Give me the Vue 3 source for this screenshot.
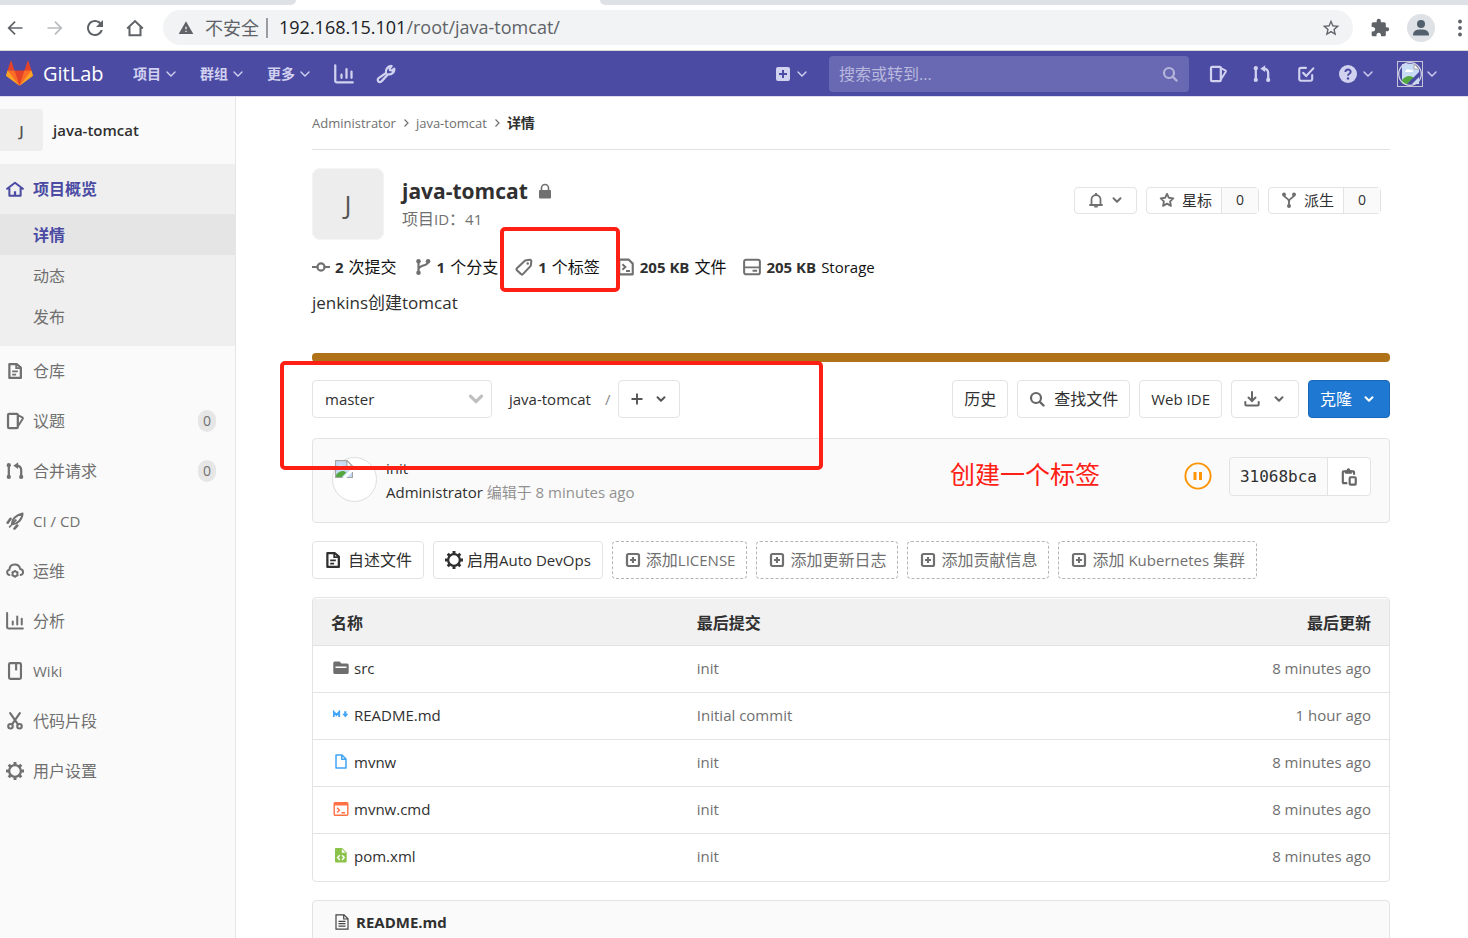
<script setup>
import { ref } from 'vue'

const branch = ref('master')
const query = ref('')

const navMenus = ['项目', '群组', '更多']
const subItems = [
  { label: '详情', active: true },
  { label: '动态', active: false },
  { label: '发布', active: false },
]
const sideItems = [
  { icon: 'doc', label: '仓库' },
  { icon: 'issues', label: '议题', count: 0 },
  { icon: 'merge', label: '合并请求', count: 0 },
  { icon: 'rocket', label: 'CI / CD', latin: true },
  { icon: 'cloud', label: '运维' },
  { icon: 'chart', label: '分析' },
  { icon: 'book', label: 'Wiki', latin: true },
  { icon: 'scissors', label: '代码片段' },
  { icon: 'gear', label: '用户设置' },
]
const files = [
  { icon: 'folder', name: 'src', commit: 'init', time: '8 minutes ago' },
  { icon: 'markdown', name: 'README.md', commit: 'Initial commit', time: '1 hour ago' },
  { icon: 'file', name: 'mvnw', commit: 'init', time: '8 minutes ago' },
  { icon: 'console', name: 'mvnw.cmd', commit: 'init', time: '8 minutes ago' },
  { icon: 'xml', name: 'pom.xml', commit: 'init', time: '8 minutes ago' },
]
</script>

<template>
  <svg class="sprite" aria-hidden="true">
    <symbol id="back" viewBox="0 0 24 24"><path d="M21 11H6.800l6-6L11.400 3.600 3 12l8.400 8.400 1.400-1.400-6-6H21z" fill="currentColor" /></symbol>
    <symbol id="forward" viewBox="0 0 24 24"><path d="M3 11h14.200l-6-6 1.400-1.400L21 12l-8.400 8.400-1.400-1.400 6-6H3z" fill="currentColor" /></symbol>
    <symbol id="reload" viewBox="0 0 24 24"><path d="M17.650 6.350C16.200 4.900 14.210 4 12 4c-4.420 0-7.990 3.580-7.990 8s3.570 8 7.990 8c3.730 0 6.840-2.550 7.730-6h-2.080c-.82 2.330-3.040 4-5.650 4-3.310 0-6-2.690-6-6s2.690-6 6-6c1.660 0 3.140.69 4.220 1.780L13 11h7V4z" fill="currentColor" /></symbol>
    <symbol id="chrome-home" viewBox="0 0 24 24"><path d="M3.500 12.500 12 4.500l8.500 8M6 11v9h12v-9" fill="none" stroke="currentColor" stroke-width="2.200" /></symbol>
    <symbol id="warning" viewBox="0 0 24 24"><path d="M1 21h22L12 2zm12-3h-2v-2h2zm0-4h-2v-4h2z" fill="currentColor" /></symbol>
    <symbol id="chrome-star" viewBox="0 0 24 24"><path d="M22 9.240l-7.190-.62L12 2 9.190 8.630 2 9.240l5.460 4.730L5.820 21 12 17.270 18.180 21l-1.630-7.030zM12 15.400l-3.760 2.270 1-4.280-3.320-2.880 4.380-.38L12 6.100l1.710 4.040 4.380.38-3.320 2.880 1 4.280z" fill="currentColor" /></symbol>
    <symbol id="puzzle" viewBox="0 0 24 24"><path d="M20.500 11H19V7c0-1.100-.9-2-2-2h-4V3.500C13 2.120 11.880 1 10.500 1S8 2.120 8 3.500V5H4c-1.100 0-1.990.9-1.990 2v3.800H3.500c1.490 0 2.700 1.210 2.700 2.700s-1.210 2.700-2.700 2.700H2V20c0 1.100.9 2 2 2h3.800v-1.500c0-1.490 1.210-2.700 2.700-2.700s2.700 1.210 2.700 2.700V22H17c1.100 0 2-.9 2-2v-4h1.500c1.380 0 2.500-1.120 2.500-2.500S21.880 11 20.500 11z" fill="currentColor" /></symbol>
    <symbol id="person" viewBox="0 0 28 28"><circle cx="14" cy="14" r="14" fill="#dee1e6" /><circle cx="14" cy="10" r="4" fill="#52606d" /><path d="M6 21.500c0-5 3-6 8-6s8 1 8 6z" fill="#52606d" /></symbol>
    <symbol id="dots" viewBox="0 0 6 18"><g fill="currentColor"><circle cx="3" cy="2.500" r="1.900" /><circle cx="3" cy="9" r="1.900" /><circle cx="3" cy="15.500" r="1.900" /></g></symbol>

    <symbol id="tanuki" viewBox="0 0 36 36">
      <path fill="#e24329" d="M2 14l9.380 9v-9l-4-12.280c-.205-.632-1.176-.632-1.380 0zM34 14l-9.380 9v-9l4-12.280c.205-.632 1.176-.632 1.380 0zM18 34.380 3 14h30z" />
      <path fill="#fc6d26" d="M18 34.380 11.380 14H2l4 11zM18 34.380 24.620 14H34l-4 11z" />
      <path fill="#fca326" d="M2 14 .1 20.160c-.18.565 0 1.200.5 1.560L18 34.380zM34 14l1.900 6.160c.18.565 0 1.200-.5 1.560L18 34.380z" />
    </symbol>
    <symbol id="angle" viewBox="0 0 10 10"><path d="M1 3l4 4 4-4" fill="none" stroke="currentColor" stroke-width="1.400" stroke-linecap="round" /></symbol>
    <symbol id="chevron" viewBox="0 0 10 10"><path d="M1.500 3.200 5 6.700l3.500-3.500" fill="none" stroke="currentColor" stroke-width="2" stroke-linecap="round" stroke-linejoin="round" /></symbol>
    <symbol id="angle-right" viewBox="0 0 10 10"><path d="M3.500 1.500 7 5 3.500 8.500" fill="none" stroke="currentColor" stroke-width="1.200" /></symbol>
    <symbol id="chart" viewBox="0 0 16 16"><path d="M1 1v12.500a1.200 1.200 0 0 0 1.200 1.200H15M6 8.500v2.500M10 4v7M14 6v5" fill="none" stroke="currentColor" stroke-width="1.800" stroke-linecap="round" /></symbol>
    <symbol id="wrench" viewBox="0 0 16 16"><path d="M8 7.200C7.400 4.800 9 1.500 12.500 1.600l-1.600 2 .3 1.400 1.500.2 1.900-1.500c.5 3-2.600 5.200-5 4.500l-5 5.500c-.8 1-2.200.9-2.800.1-.7-.8-.5-1.900.3-2.500z" fill="none" stroke="currentColor" stroke-width="1.800" stroke-linejoin="round" /></symbol>
    <symbol id="plus-solid" viewBox="0 0 16 16"><path fill-rule="evenodd" d="M3 1h10a2 2 0 0 1 2 2v10a2 2 0 0 1-2 2H3a2 2 0 0 1-2-2V3a2 2 0 0 1 2-2zm4 3v3H4v2h3v3h2V9h3V7H9V4z" fill="currentColor" /></symbol>
    <symbol id="plus-square" viewBox="0 0 16 16"><rect x="2" y="2" width="12" height="12" rx="1.500" fill="none" stroke="currentColor" stroke-width="2.200" /><path d="M8 5v6M5 8h6" stroke="currentColor" stroke-width="2.100" /></symbol>
    <symbol id="search" viewBox="0 0 16 16"><circle cx="7" cy="7" r="5" fill="none" stroke="currentColor" stroke-width="2.200" /><path d="M11 11l3.500 3.500" stroke="currentColor" stroke-width="2.400" stroke-linecap="round" /></symbol>
    <symbol id="issues" viewBox="0 0 16 16"><rect x="1.800" y="1.700" width="8.700" height="12.600" rx="1" fill="none" stroke="currentColor" stroke-width="2" /><path d="M10.500 2.800l4 2c.5.300.6.700.4 1.100l-4.400 7" fill="none" stroke="currentColor" stroke-width="1.700" stroke-linejoin="round" /></symbol>
    <symbol id="merge" viewBox="0 0 16 16"><g fill="currentColor"><circle cx="2.500" cy="2.800" r="1.900" /><circle cx="2.500" cy="13.300" r="1.900" /><circle cx="13.500" cy="13.300" r="1.900" /><path d="M10.800.3v6L6.500 3.300z" /></g><path d="M2.500 3v10M9 3.300c3 0 4.500 1.300 4.500 4V13" fill="none" stroke="currentColor" stroke-width="2" /></symbol>
    <symbol id="todo" viewBox="0 0 16 16"><path d="M8 2.500H3.500A1.500 1.500 0 0 0 2 4v8.500A1.500 1.500 0 0 0 3.500 14H12a1.500 1.500 0 0 0 1.500-1.500V9M5.500 7l2.700 2.700L14.500 3" fill="none" stroke="currentColor" stroke-width="1.900" stroke-linecap="round" /></symbol>
    <symbol id="help" viewBox="0 0 16 16"><circle cx="8" cy="8" r="8" fill="currentColor" /><path d="M5.700 6.300c0-3 4.700-2.900 4.700-.2C10.400 7.900 8 7.600 8 9.500" fill="none" stroke="#4b4ba3" stroke-width="1.700" /><circle cx="8" cy="12" r="1.100" fill="#4b4ba3" /></symbol>
    <symbol id="broken" viewBox="0 0 16 16"><path d="M.5.500h10l5 5v10H.5z" fill="#c9dcf5" stroke="#a4a4a4" /><path d="M10.500.500v5h5z" fill="#fff" stroke="#a4a4a4" /><path d="M3 6.500a2 2 0 0 1 3.500-1 1.500 1.500 0 0 1 2 1.500H3z" fill="#fff" /><path d="M1 15v-2c3-4 7-4 9-2l-4 4z" fill="#53a93f" /><path d="M16 6.500 6.500 16H10l6-6z" fill="#fff" /></symbol>
    <symbol id="user-image" viewBox="0 0 24 24"><path d="M4 2h12l5 5v15H4z" fill="#c9dcf5" /><path d="M16 2v5h5z" fill="#fff" stroke="#a4a4a4" /><path d="M7 10a3 3 0 0 1 5-2 2 2 0 0 1 3 2z" fill="#fff" /><path d="M4 22v-4c4-5 9-5 12-2l-6 6z" fill="#53a93f" /><path d="M21 10 9 22h5l7-7z" fill="#4b4ba3" /><circle cx="12" cy="12" r="11.300" fill="none" stroke="#d5d5e8" stroke-width="1.200" /></symbol>

    <symbol id="home" viewBox="0 0 16 16"><path d="M1 7.800 8 2.500l7 5.300M3 7v7h10V7" fill="none" stroke="currentColor" stroke-width="1.800" stroke-linecap="round" stroke-linejoin="round" /><path d="M8 10v4" stroke="currentColor" stroke-width="2" /></symbol>
    <symbol id="doc" viewBox="0 0 16 16"><path d="M3 1.800h6.500L13.200 5v9.200H3z" fill="none" stroke="currentColor" stroke-width="2" stroke-linejoin="round" /><path d="M9 1.500V5.500h4M5.500 8.300h5M5.500 11.300h3.500" fill="none" stroke="currentColor" stroke-width="1.500" /></symbol>
    <symbol id="rocket" viewBox="0 0 16 16"><path d="M5.200 10.800C5 7 8.500 2.500 14.700 1.300 14.500 6.500 10 11.200 5.200 10.800zM5.200 10.800l4-4" fill="none" stroke="currentColor" stroke-width="1.800" stroke-linejoin="round" /><path d="M4 6 1.500 9.500M10 12l-2.500 2.700" stroke="currentColor" stroke-width="2.300" stroke-linecap="round" /><path d="M4.500 12l-1.300 1.300" stroke="currentColor" stroke-width="1.500" stroke-linecap="round" /></symbol>
    <symbol id="cloud" viewBox="0 0 16 16"><path d="M3 11.500C.5 11 .2 7.300 3 6.800 3.500.8 11.500.8 12.700 6.300c3.200.5 3.200 4.700.3 5.200" fill="none" stroke="currentColor" stroke-width="1.800" stroke-linecap="round" /><circle cx="8" cy="10.500" r="2.200" fill="none" stroke="currentColor" stroke-width="1.700" /><path d="M8 7v1.300M8 12.700V14M5 8.800l1 .6M10 11.600l1 .6M11 8.800l-1 .6M6 11.600l-1 .6" stroke="currentColor" stroke-width="1.400" /></symbol>
    <symbol id="book" viewBox="0 0 16 16"><rect x="2.700" y="1" width="10.600" height="14" rx="1.200" fill="none" stroke="currentColor" stroke-width="1.900" /><path d="M9 1.500v6" stroke="currentColor" stroke-width="1.900" /></symbol>
    <symbol id="scissors" viewBox="0 0 16 16"><g fill="none" stroke="currentColor" stroke-width="1.900" stroke-linecap="round"><circle cx="4" cy="12.700" r="2" /><circle cx="12" cy="12.700" r="2" /><path d="M3.700 1l6.800 9.800M12.300 1 5.500 10.800" /></g></symbol>
    <symbol id="gear" viewBox="0 0 16 16"><circle cx="8" cy="8" r="5.200" fill="none" stroke="currentColor" stroke-width="2" /><path d="M8 0v3M8 13v3M0 8h3M13 8h3M2.400 2.400l2 2M11.600 11.600l2 2M13.600 2.400l-2 2M4.400 11.600l-2 2" stroke="currentColor" stroke-width="2.600" /></symbol>

    <symbol id="lock" viewBox="0 0 16 16"><rect x="2" y="7" width="12" height="8.500" rx="1" fill="currentColor" /><path d="M4.500 8V5a3.500 3.500 0 0 1 7 0v3" fill="none" stroke="currentColor" stroke-width="1.600" /></symbol>
    <symbol id="commit" viewBox="0 0 16 16"><circle cx="8" cy="8" r="3.200" fill="none" stroke="currentColor" stroke-width="1.900" /><path d="M.5 8H5M11 8h4.500" stroke="currentColor" stroke-width="1.900" stroke-linecap="round" /></symbol>
    <symbol id="branch" viewBox="0 0 16 16"><g fill="currentColor"><circle cx="4" cy="2.800" r="2" /><circle cx="4" cy="13.200" r="2" /><circle cx="12.500" cy="2.800" r="2" /></g><path d="M4 3v10M12.500 3c0 5-8.500 2.500-8.500 7.500" fill="none" stroke="currentColor" stroke-width="1.900" /></symbol>
    <symbol id="tag" viewBox="0 0 16 16"><path d="M9 2.200l4.200-.6c.8-.1 1.400.5 1.300 1.300L14 7l-7 7.300c-.5.500-1.200.5-1.700 0L1.700 10.800c-.5-.5-.5-1.200 0-1.700z" fill="none" stroke="currentColor" stroke-width="1.800" stroke-linejoin="round" /><circle cx="11.300" cy="4.800" r="1.100" fill="currentColor" /></symbol>
    <symbol id="code-file" viewBox="0 0 16 16"><path d="M2 1.500h8.500L14 5v9.500H2z" fill="none" stroke="currentColor" stroke-width="1.900" stroke-linejoin="round" /><path d="M4.800 5.500 7.500 8l-2.700 2.500M8 11.500h3.500" fill="none" stroke="currentColor" stroke-width="1.700" /></symbol>
    <symbol id="disk" viewBox="0 0 16 16"><rect x="1" y="1.500" width="14" height="13" rx="1.700" fill="none" stroke="currentColor" stroke-width="1.800" /><path d="M1 8.300h14M8.500 11.400h4" stroke="currentColor" stroke-width="1.700" /></symbol>
    <symbol id="bell" viewBox="0 0 16 16"><path d="M2 13h12M3.500 13V7.500a4.500 4.500 0 0 1 9 0V13" fill="none" stroke="currentColor" stroke-width="1.800" stroke-linecap="round" /><path d="M8 1v2M6.300 14.500h3.400" stroke="currentColor" stroke-width="2" /></symbol>
    <symbol id="star" viewBox="0 0 16 16"><path d="M8 1.800l1.900 4 4.400.6-3.200 3 .8 4.400L8 11.700l-3.900 2.100.8-4.400-3.200-3 4.400-.6z" fill="none" stroke="currentColor" stroke-width="1.900" stroke-linejoin="round" /></symbol>
    <symbol id="fork" viewBox="0 0 16 16"><g fill="currentColor"><circle cx="3" cy="2.500" r="2" /><circle cx="13" cy="2.500" r="2" /><circle cx="8" cy="14" r="2" /></g><path d="M3 3c0 3.500 5 2.500 5 6.500V14M13 3c0 3.500-5 2.500-5 6.500" fill="none" stroke="currentColor" stroke-width="1.900" /></symbol>
    <symbol id="plus" viewBox="0 0 12 12"><path d="M6 .5v11M.5 6h11" stroke="currentColor" stroke-width="1.900" /></symbol>
    <symbol id="download" viewBox="0 0 16 16"><path d="M8 1v8M4.500 6.500 8 10l3.500-3.500M1.300 11v2.200c0 .8.500 1.200 1.200 1.200h11c.7 0 1.200-.4 1.200-1.200V11" fill="none" stroke="currentColor" stroke-width="2" stroke-linecap="round" /></symbol>
    <symbol id="clipboard" viewBox="0 0 16 16"><path d="M6.500 13.500H3.300c-.5 0-.8-.3-.8-.8V3.800c0-.5.300-.8.800-.8h8.400c.5 0 .8.300.8.800V6" fill="none" stroke="currentColor" stroke-width="1.900" /><path d="M4.500 5V2.500l1.500-.7C6.200-.2 8.800-.2 9 1.800l1.500.7V5z" fill="currentColor" /><rect x="8.600" y="8.200" width="5.400" height="6.600" rx=".8" fill="none" stroke="currentColor" stroke-width="1.900" /></symbol>
    <symbol id="pause" viewBox="0 0 28 28"><circle cx="14" cy="14" r="12.600" fill="none" stroke="currentColor" stroke-width="1.900" /><path d="M9.500 10h3v8h-3zM15 10h3v8h-3z" fill="currentColor" /></symbol>

    <symbol id="folder" viewBox="0 0 16 16"><path fill-rule="evenodd" d="M1.500 1.500h5L8.500 3.500H14A1.600 1.600 0 0 1 15.700 5v7.500A1.600 1.600 0 0 1 14 14H2a1.600 1.600 0 0 1-1.700-1.500V3a1.500 1.500 0 0 1 1.200-1.500zM2.500 6.500V8h11V6.500z" fill="#6e6e6e" /></symbol>
    <symbol id="markdown" viewBox="0 0 16 16"><path d="M.8 10V5l2.700 3L6.200 5v5" fill="none" stroke="#42a5f5" stroke-width="1.900" /><path d="M11.200 4.200h2.200v2.600h2L12.300 10.500 9.200 6.800h2z" fill="#42a5f5" /></symbol>
    <symbol id="file" viewBox="0 0 16 16"><path d="M3 1h6l4 4v9H3zM8.700 1v4.300H13" fill="none" stroke="#42a5f5" stroke-width="1.500" stroke-linejoin="round" /></symbol>
    <symbol id="console" viewBox="0 0 16 16"><rect x="1.200" y="1.700" width="13.600" height="12.600" rx="1" fill="none" stroke="#ff7043" stroke-width="1.400" /><path d="M1 3h14" stroke="#ff7043" stroke-width="3" /><path d="M4 6.800l2.500 2.400L4 11.600M8.500 11.800H12" fill="none" stroke="#ff7043" stroke-width="1.400" /></symbol>
    <symbol id="xml" viewBox="0 0 16 16"><path d="M3.300 0H9l4.700 4.500v9a1.200 1.200 0 0 1-1.200 1.100H3.300A1.200 1.200 0 0 1 2 13.300V1.300A1.200 1.200 0 0 1 3.300 0z" fill="#8bc34a" /><path d="M8.800 1.100V4.800h3.900z" fill="#fff" /><path d="M6.800 7.300 4.600 9.600l2.200 2.300M9 7.300l2.200 2.300L9 11.900" fill="none" stroke="#fff" stroke-width="1.400" /></symbol>
    <symbol id="readme" viewBox="0 0 16 16"><path d="M2 .8h8l4 4v10.400H2zM9.700.8V5H14M4.500 7.300h7M4.500 9.700h7M4.500 12.100h7" fill="none" stroke="#444" stroke-width="1.200" /></symbol>
  </svg>

  <div class="window">
    <header class="chrome">
      <div class="tabs"><span class="tab-left"></span><span class="tab-right"></span></div>
      <div class="toolbar">
        <button class="tool" aria-label="Back"><svg class="i20"><use href="#back" /></svg></button>
        <button class="tool faded" aria-label="Forward"><svg class="i20"><use href="#forward" /></svg></button>
        <button class="tool" aria-label="Reload"><svg class="i24"><use href="#reload" /></svg></button>
        <button class="tool" aria-label="Home"><svg class="i22"><use href="#chrome-home" /></svg></button>
        <div class="address">
          <svg class="i16"><use href="#warning" /></svg>
          <span class="insecure">不安全</span>
          <span class="bar"></span>
          <span class="url"><b>192.168.15.101</b>/root/java-tomcat/</span>
          <button class="bookmark" aria-label="Bookmark"><svg class="i20"><use href="#chrome-star" /></svg></button>
        </div>
        <button class="ext" aria-label="Extensions"><svg class="i20"><use href="#puzzle" /></svg></button>
        <button class="profile" aria-label="Profile"><svg class="i28"><use href="#person" /></svg></button>
        <button class="more" aria-label="Menu"><svg class="dots"><use href="#dots" /></svg></button>
      </div>
    </header>

    <nav class="nav">
      <a class="brand" href="#"><svg class="logo"><use href="#tanuki" /></svg><span>GitLab</span></a>
      <button v-for="menu in navMenus" :key="menu" class="menu">{{ menu }}<svg class="i10"><use href="#angle" /></svg></button>
      <a class="nav-chart" href="#" aria-label="Analytics"><svg class="i20"><use href="#chart" /></svg></a>
      <a class="nav-wrench" href="#" aria-label="Admin"><svg class="i20"><use href="#wrench" /></svg></a>
      <button class="new" aria-label="New"><svg class="i16"><use href="#plus-solid" /></svg><svg class="i10"><use href="#angle" /></svg></button>
      <label class="search">
        <input v-model="query" type="text" placeholder="搜索或转到..." aria-label="搜索或转到" />
        <svg class="i16"><use href="#search" /></svg>
      </label>
      <div class="nav-icons">
        <a href="#" aria-label="Issues"><svg class="i18"><use href="#issues" /></svg></a>
        <a href="#" aria-label="Merge requests"><svg class="i18"><use href="#merge" /></svg></a>
        <a href="#" aria-label="To-do"><svg class="i18"><use href="#todo" /></svg></a>
      </div>
      <button class="help" aria-label="Help"><svg class="i18"><use href="#help" /></svg><svg class="i10"><use href="#angle" /></svg></button>
      <button class="user" aria-label="User"><span class="user-pic"><svg class="i24"><use href="#user-image" /></svg></span><svg class="i10"><use href="#angle" /></svg></button>
    </nav>

    <div class="body">
      <aside class="sidebar">
        <a class="context" href="#"><span class="context-avatar">J</span><span>java-tomcat</span></a>
        <div class="overview">
          <a class="side-link current" href="#"><svg class="i18"><use href="#home" /></svg><span>项目概览</span></a>
          <a v-for="item in subItems" :key="item.label" class="sub-link" :class="{ active: item.active }" href="#">{{ item.label }}</a>
        </div>
        <a v-for="item in sideItems" :key="item.label" class="side-link" href="#">
          <svg class="i18"><use :href="'#' + item.icon" /></svg>
          <span :class="{ latin: item.latin }">{{ item.label }}</span>
          <span v-if="item.count !== undefined" class="badge">{{ item.count }}</span>
        </a>
      </aside>

      <main class="main">
        <div class="crumbs">
          <a href="#">Administrator</a><svg class="i10"><use href="#angle-right" /></svg>
          <a href="#">java-tomcat</a><svg class="i10"><use href="#angle-right" /></svg>
          <strong>详情</strong>
        </div>

        <section class="project">
          <div class="project-avatar">J</div>
          <div class="project-title">
            <h1>java-tomcat<svg class="i16"><use href="#lock" /></svg></h1>
            <p><span class="cjk">项目</span>ID<span class="cjk">：</span>41</p>
          </div>
          <div class="project-actions">
            <button class="btn-small bell"><svg class="i16"><use href="#bell" /></svg><svg class="i10"><use href="#chevron" /></svg></button>
            <div class="count-group"><button><svg class="i16"><use href="#star" /></svg>星标</button><a href="#">0</a></div>
            <div class="count-group"><button><svg class="i16"><use href="#fork" /></svg>派生</button><a href="#">0</a></div>
          </div>
        </section>

        <div class="stats">
          <a href="#"><svg class="i18"><use href="#commit" /></svg><b>2</b><span class="cjk">次提交</span></a>
          <a href="#"><svg class="i18"><use href="#branch" /></svg><b>1</b><span class="cjk">个分支</span></a>
          <a href="#"><svg class="i18"><use href="#tag" /></svg><b>1</b><span class="cjk">个标签</span></a>
          <a href="#"><svg class="i18"><use href="#code-file" /></svg><b>205 KB</b><span class="cjk">文件</span></a>
          <a href="#"><svg class="i18"><use href="#disk" /></svg><b>205 KB</b><span>Storage</span></a>
        </div>
        <p class="description">jenkins创建tomcat</p>
        <div class="language"></div>

        <div class="tree-bar">
          <div class="branch">
            <select v-model="branch" aria-label="Branch"><option>master</option></select>
            <svg class="i16"><use href="#chevron" /></svg>
          </div>
          <a class="path" href="#">java-tomcat</a><span class="slash">/</span>
          <button class="btn add" aria-label="Add"><svg class="i12"><use href="#plus" /></svg><svg class="i10"><use href="#chevron" /></svg></button>
          <div class="tree-actions">
            <a class="btn cjk" href="#">历史</a>
            <a class="btn cjk find" href="#"><svg class="i16"><use href="#search" /></svg>查找文件</a>
            <a class="btn" href="#">Web IDE</a>
            <button class="btn load" aria-label="Download"><svg class="i16"><use href="#download" /></svg><svg class="i10"><use href="#chevron" /></svg></button>
            <button class="btn cjk clone">克隆<svg class="i10"><use href="#chevron" /></svg></button>
          </div>
        </div>

        <section class="commit">
          <div class="commit-avatar"><svg class="i18"><use href="#broken" /></svg></div>
          <div class="commit-text">
            <a href="#">init</a>
            <div><a href="#">Administrator</a> 编辑于 8 minutes ago</div>
          </div>
          <div class="commit-side">
            <a class="pipeline" href="#" aria-label="Pipeline"><svg class="i28"><use href="#pause" /></svg></a>
            <div class="sha"><span>31068bca</span><button aria-label="Copy"><svg class="i18"><use href="#clipboard" /></svg></button></div>
          </div>
        </section>

        <div class="quick">
          <a class="btn" href="#"><svg class="i18"><use href="#doc" /></svg><span class="cjk">自述文件</span></a>
          <a class="btn devops" href="#"><svg class="i18"><use href="#gear" /></svg><span><span class="cjk">启用</span>Auto DevOps</span></a>
          <a class="btn dashed" href="#"><svg class="i16"><use href="#plus-square" /></svg><span><span class="cjk">添加</span>LICENSE</span></a>
          <a class="btn dashed" href="#"><svg class="i16"><use href="#plus-square" /></svg><span class="cjk">添加更新日志</span></a>
          <a class="btn dashed" href="#"><svg class="i16"><use href="#plus-square" /></svg><span class="cjk">添加贡献信息</span></a>
          <a class="btn dashed" href="#"><svg class="i16"><use href="#plus-square" /></svg><span><span class="cjk">添加</span> Kubernetes <span class="cjk">集群</span></span></a>
        </div>

        <div class="files">
          <table>
            <thead>
              <tr><th class="name">名称</th><th>最后提交</th><th class="time">最后更新</th></tr>
            </thead>
            <tbody>
              <tr v-for="file in files" :key="file.name">
                <td><a class="file-link" href="#"><svg class="i16"><use :href="'#' + file.icon" /></svg><span>{{ file.name }}</span></a></td>
                <td>{{ file.commit }}</td>
                <td class="time">{{ file.time }}</td>
              </tr>
            </tbody>
          </table>
        </div>

        <section class="readme"><svg class="i16"><use href="#readme" /></svg><strong>README.md</strong></section>
      </main>
    </div>

    <div class="mark mark-tag"></div>
    <div class="mark mark-branch"></div>
    <div class="note">创建一个标签</div>
  </div>
</template>

<style>
body {
  background: #fff;
}
</style>

<style scoped>
.sprite {
  position: absolute;
  width: 0;
  height: 0;
}
.window {
  position: relative;
  display: flex;
  flex-direction: column;
  height: 100vh;
  overflow: hidden;
  font-family: "Open Sans", "Noto Sans CJK SC", sans-serif;
  font-size: 15px;
  line-height: 24px;
  color: #303030;
}
.window *,
.window *::before {
  box-sizing: border-box;
}
a {
  color: inherit;
  text-decoration: none;
}
button,
input,
select {
  margin: 0;
  padding: 0;
  border: 0;
  background: none;
  color: inherit;
  font: inherit;
}
p,
h1 {
  margin: 0;
}
svg {
  flex: none;
  display: block;
}
.cjk {
  font-size: 16px;
}
.i10 { width: 10px; height: 10px; }
.i12 { width: 12px; height: 12px; }
.i16 { width: 16px; height: 16px; }
.i18 { width: 18px; height: 18px; }
.i20 { width: 20px; height: 20px; }
.i22 { width: 22px; height: 22px; }
.i24 { width: 24px; height: 24px; }
.i28 { width: 28px; height: 28px; }

/* browser chrome */
.chrome {
  flex: none;
  border-bottom: 1px solid #d5d7da;
}
.tabs {
  display: flex;
  gap: 304px;
  height: 5px;
}
.tab-left {
  width: 296px;
  background: #dee1e6;
  border-bottom-right-radius: 5px;
}
.tab-right {
  flex: 1;
  background: #dee1e6;
  border-bottom-left-radius: 5px;
}
.toolbar {
  display: flex;
  align-items: center;
  height: 45px;
  color: #5f6368;
}
.tool {
  display: flex;
  align-items: center;
  justify-content: center;
  width: 40px;
  height: 40px;
  margin-left: -5px;
  margin-right: 5px;
}
.faded {
  color: #babcbe;
}
.address {
  flex: 1;
  display: flex;
  align-items: center;
  height: 35px;
  margin-left: 3px;
  padding: 0 12px 0 15px;
  border-radius: 18px;
  background: #f1f3f4;
}
.insecure {
  margin-left: 11px;
  font-size: 18px;
}
.bar {
  width: 2px;
  height: 20px;
  margin: 0 11px 0 7px;
  background: #9a9c9f;
}
.url {
  padding-bottom: 2px;
  font-size: 18px;
}
.url b {
  font-weight: 400;
  color: #202124;
}
.bookmark {
  margin-left: auto;
}
.ext {
  margin-left: 17px;
}
.profile {
  margin-left: 17px;
}
.more {
  margin: 0 5px 0 22px;
}
.dots {
  width: 6px;
  height: 18px;
}

/* GitLab navigation */
.nav {
  flex: none;
  display: flex;
  align-items: center;
  height: 46px;
  padding-right: 31px;
  border-bottom: 1px solid #dcdcf0;
  background: #4b4ba3;
  color: #d1d1f0;
}
.brand {
  display: flex;
  align-items: center;
  gap: 10px;
  width: 133px;
  padding-left: 6px;
  color: #fff;
  font-size: 20px;
}
.logo {
  width: 27px;
  height: 27px;
}
.menu {
  display: flex;
  align-items: center;
  gap: 5px;
  margin-right: 24px;
  font-size: 14px;
  font-weight: 700;
}
.nav-wrench {
  margin-left: 22px;
}
.new {
  display: flex;
  align-items: center;
  gap: 6px;
  margin-left: auto;
}
.search {
  display: flex;
  align-items: center;
  width: 360px;
  height: 36px;
  margin: 0 20px 0 22px;
  padding: 0 11px 0 10px;
  border-radius: 4px;
  background: #6868b3;
  color: #b5b5dc;
}
.search input {
  flex: 1;
  min-width: 0;
  outline: 0;
  color: #fff;
  font-size: 16px;
}
.search input::placeholder {
  color: #b9b9de;
  opacity: 1;
}
.nav-icons {
  display: flex;
  gap: 26px;
}
.help {
  display: flex;
  align-items: center;
  gap: 6px;
  margin-left: 24px;
}
.user {
  display: flex;
  align-items: center;
  gap: 4px;
  margin-left: 24px;
}
.user-pic {
  border: 1px solid #c5c5d6;
}

/* sidebar */
.body {
  flex: 1;
  display: flex;
  min-height: 0;
}
.sidebar {
  flex: none;
  width: 236px;
  border-right: 1px solid #e5e5e5;
  background: #fafafa;
  color: #707070;
}
.context {
  display: flex;
  align-items: center;
  gap: 10px;
  height: 67px;
  padding-bottom: 2px;
  color: #303030;
  font-weight: 600;
}
.context-avatar {
  display: flex;
  align-items: center;
  justify-content: center;
  width: 43px;
  height: 42px;
  border-radius: 0 4px 4px 0;
  background: #eee;
  color: #555;
}
.overview {
  padding-bottom: 9px;
  background: #efefef;
}
.side-link {
  display: flex;
  align-items: center;
  gap: 9px;
  height: 50px;
  padding: 0 19px 0 6px;
  font-size: 16px;
}
.side-link .latin {
  font-size: 15px;
}
.current {
  color: #4b4ba3;
  font-weight: 600;
}
.sub-link {
  display: flex;
  align-items: center;
  height: 41px;
  padding-left: 33px;
  font-size: 16px;
}
.sub-link.active {
  background: #e5e5e5;
  color: #4b4ba3;
  font-weight: 600;
}
.badge {
  width: 18px;
  height: 22px;
  margin-left: auto;
  border-radius: 9px;
  background: #e6e6e6;
  font-size: 14px;
  line-height: 22px;
  text-align: center;
}

/* project header */
.main {
  flex: 1;
  min-width: 0;
  padding: 0 78px 0 76px;
}
.crumbs {
  display: flex;
  align-items: center;
  gap: 5px;
  height: 53px;
  border-bottom: 1px solid #e1e1e1;
  color: #707070;
  font-size: 13px;
}
.crumbs strong {
  color: #303030;
  font-size: 14px;
}
.project {
  display: flex;
  align-items: center;
  height: 72px;
  margin-top: 18px;
}
.project-avatar {
  display: flex;
  align-items: center;
  justify-content: center;
  width: 72px;
  height: 72px;
  border: 1px solid #f4f4f4;
  border-radius: 8px;
  background: #ededed;
  color: #555;
  font-size: 26px;
}
.project-title {
  margin: 0 0 3px 18px;
}
.project-title h1 {
  display: flex;
  align-items: center;
  gap: 9px;
  font-size: 21px;
  line-height: 32px;
}
.project-title svg {
  color: #707070;
}
.project-title p {
  color: #707070;
}
.project-actions {
  display: flex;
  gap: 9px;
  margin: 0 9px 8px auto;
  color: #303030;
}
.project-actions svg {
  color: #707070;
}
.btn-small {
  display: flex;
  align-items: center;
  gap: 8px;
  height: 27px;
  padding: 0 14px 0 13px;
  border: 1px solid #e3e3e3;
  border-radius: 4px;
}
.count-group {
  display: flex;
  height: 27px;
  border: 1px solid #e3e3e3;
  border-radius: 4px;
}
.count-group button {
  display: flex;
  align-items: center;
  gap: 7px;
  padding: 0 9px 0 12px;
}
.count-group a {
  width: 37px;
  border-left: 1px solid #e3e3e3;
  background: #fafafa;
  font-size: 14px;
  text-align: center;
}
.stats {
  display: flex;
  gap: 17px;
  margin-top: 15px;
  color: #111;
}
.stats a {
  display: flex;
  align-items: center;
  gap: 5px;
}
.stats svg {
  color: #707070;
}
.stats b {
  color: #303030;
}
.description {
  margin-top: 12px;
  font-size: 17px;
}
.language {
  height: 9px;
  margin-top: 38px;
  border-radius: 4px;
  background: #b07219;
}

/* repository toolbar */
.tree-bar {
  display: flex;
  align-items: center;
  height: 38px;
  margin-top: 18px;
}
.branch {
  display: flex;
  align-items: center;
  width: 180px;
  height: 38px;
  border: 1px solid #e3e3e3;
  border-radius: 4px;
}
.branch select {
  flex: 1;
  height: 36px;
  margin-right: -16px;
  padding-left: 12px;
  appearance: none;
}
.branch svg {
  margin-right: 7px;
  color: #bfbfbf;
  pointer-events: none;
}
.path {
  margin-left: 17px;
}
.slash {
  margin: 0 8px 0 14px;
  color: #888;
}
.btn {
  display: flex;
  align-items: center;
  justify-content: center;
  gap: 6px;
  height: 38px;
  padding: 0 11px;
  border: 1px solid #e3e3e3;
  border-radius: 4px;
  background: #fff;
  white-space: nowrap;
}
.add {
  gap: 13px;
  padding: 0 13px 0 12px;
  color: #555;
}
.tree-actions {
  display: flex;
  gap: 9px;
  margin-left: auto;
}
.find {
  gap: 9px;
}
.find svg,
.load {
  color: #666;
}
.load {
  gap: 14px;
  padding: 0 14px 0 12px;
}
.clone {
  gap: 12px;
  padding: 0 15px 0 11px;
  border-color: #1b69b6;
  background: #1f78d1;
  color: #fff;
}
.commit {
  display: flex;
  align-items: center;
  height: 85px;
  margin-top: 20px;
  padding: 0 18px 2px 19px;
  border: 1px solid #e3e3e3;
  border-radius: 4px;
  background: #fafafa;
}
.commit-avatar {
  width: 45px;
  height: 45px;
  padding: 2px;
  border: 1px solid #dedede;
  border-radius: 50%;
  background: #fff;
}
.commit-text {
  margin-left: 9px;
  color: #919191;
}
.commit-text a {
  color: #303030;
}
.commit-side {
  display: flex;
  align-items: center;
  gap: 17px;
  margin: 0 0 6px auto;
}
.pipeline {
  padding-bottom: 2px;
  color: #fc9403;
}
.sha {
  display: flex;
  height: 39px;
  border: 1px solid #e3e3e3;
  border-radius: 4px;
}
.sha span {
  padding: 0 10px;
  font-family: "DejaVu Sans Mono", monospace;
  font-size: 16px;
  line-height: 37px;
}
.sha button {
  display: flex;
  align-items: center;
  justify-content: center;
  width: 43px;
  border-left: 1px solid #e3e3e3;
  border-radius: 0 4px 4px 0;
  background: #fff;
  color: #666;
}
.quick {
  display: flex;
  gap: 9px;
  margin-top: 18px;
}
.devops {
  gap: 4px;
}
.dashed {
  gap: 5px;
  padding: 0 11px 0 12px;
  border: 1px dashed #b5b5b5;
  color: #707070;
}

/* file table */
.files {
  margin-top: 18px;
  padding: 1px 0;
  border: 1px solid #e3e3e3;
  border-radius: 4px;
}
table {
  width: 100%;
  table-layout: fixed;
  border-collapse: collapse;
}
th {
  height: 46px;
  padding: 2px 18px 0;
  border-bottom: 1px solid #e3e3e3;
  background: #f1f1f1;
  font-size: 16px;
  text-align: left;
}
td {
  height: 47px;
  padding: 0 18px 2px;
  color: #707070;
}
tr + tr td {
  border-top: 1px solid #e3e3e3;
}
.name {
  width: 34%;
}
th.time,
td.time {
  text-align: right;
}
.file-link {
  display: flex;
  align-items: center;
  gap: 5px;
  padding-left: 2px;
  color: #303030;
}
.readme {
  display: flex;
  align-items: center;
  gap: 6px;
  height: 44px;
  margin-top: 18px;
  padding: 0 21px;
  border: 1px solid #e3e3e3;
  border-radius: 4px 4px 0 0;
  background: #fafafa;
}

/* annotations drawn over the page */
.mark {
  position: absolute;
  border: 4px solid #ff2015;
  border-radius: 5px;
  pointer-events: none;
}
.mark-tag {
  left: 500px;
  top: 227px;
  width: 120px;
  height: 65px;
}
.mark-branch {
  left: 280px;
  top: 361px;
  width: 543px;
  height: 109px;
}
.note {
  position: absolute;
  left: 950px;
  top: 456px;
  color: #ff2015;
  font-size: 25px;
  line-height: 36px;
}
</style>
